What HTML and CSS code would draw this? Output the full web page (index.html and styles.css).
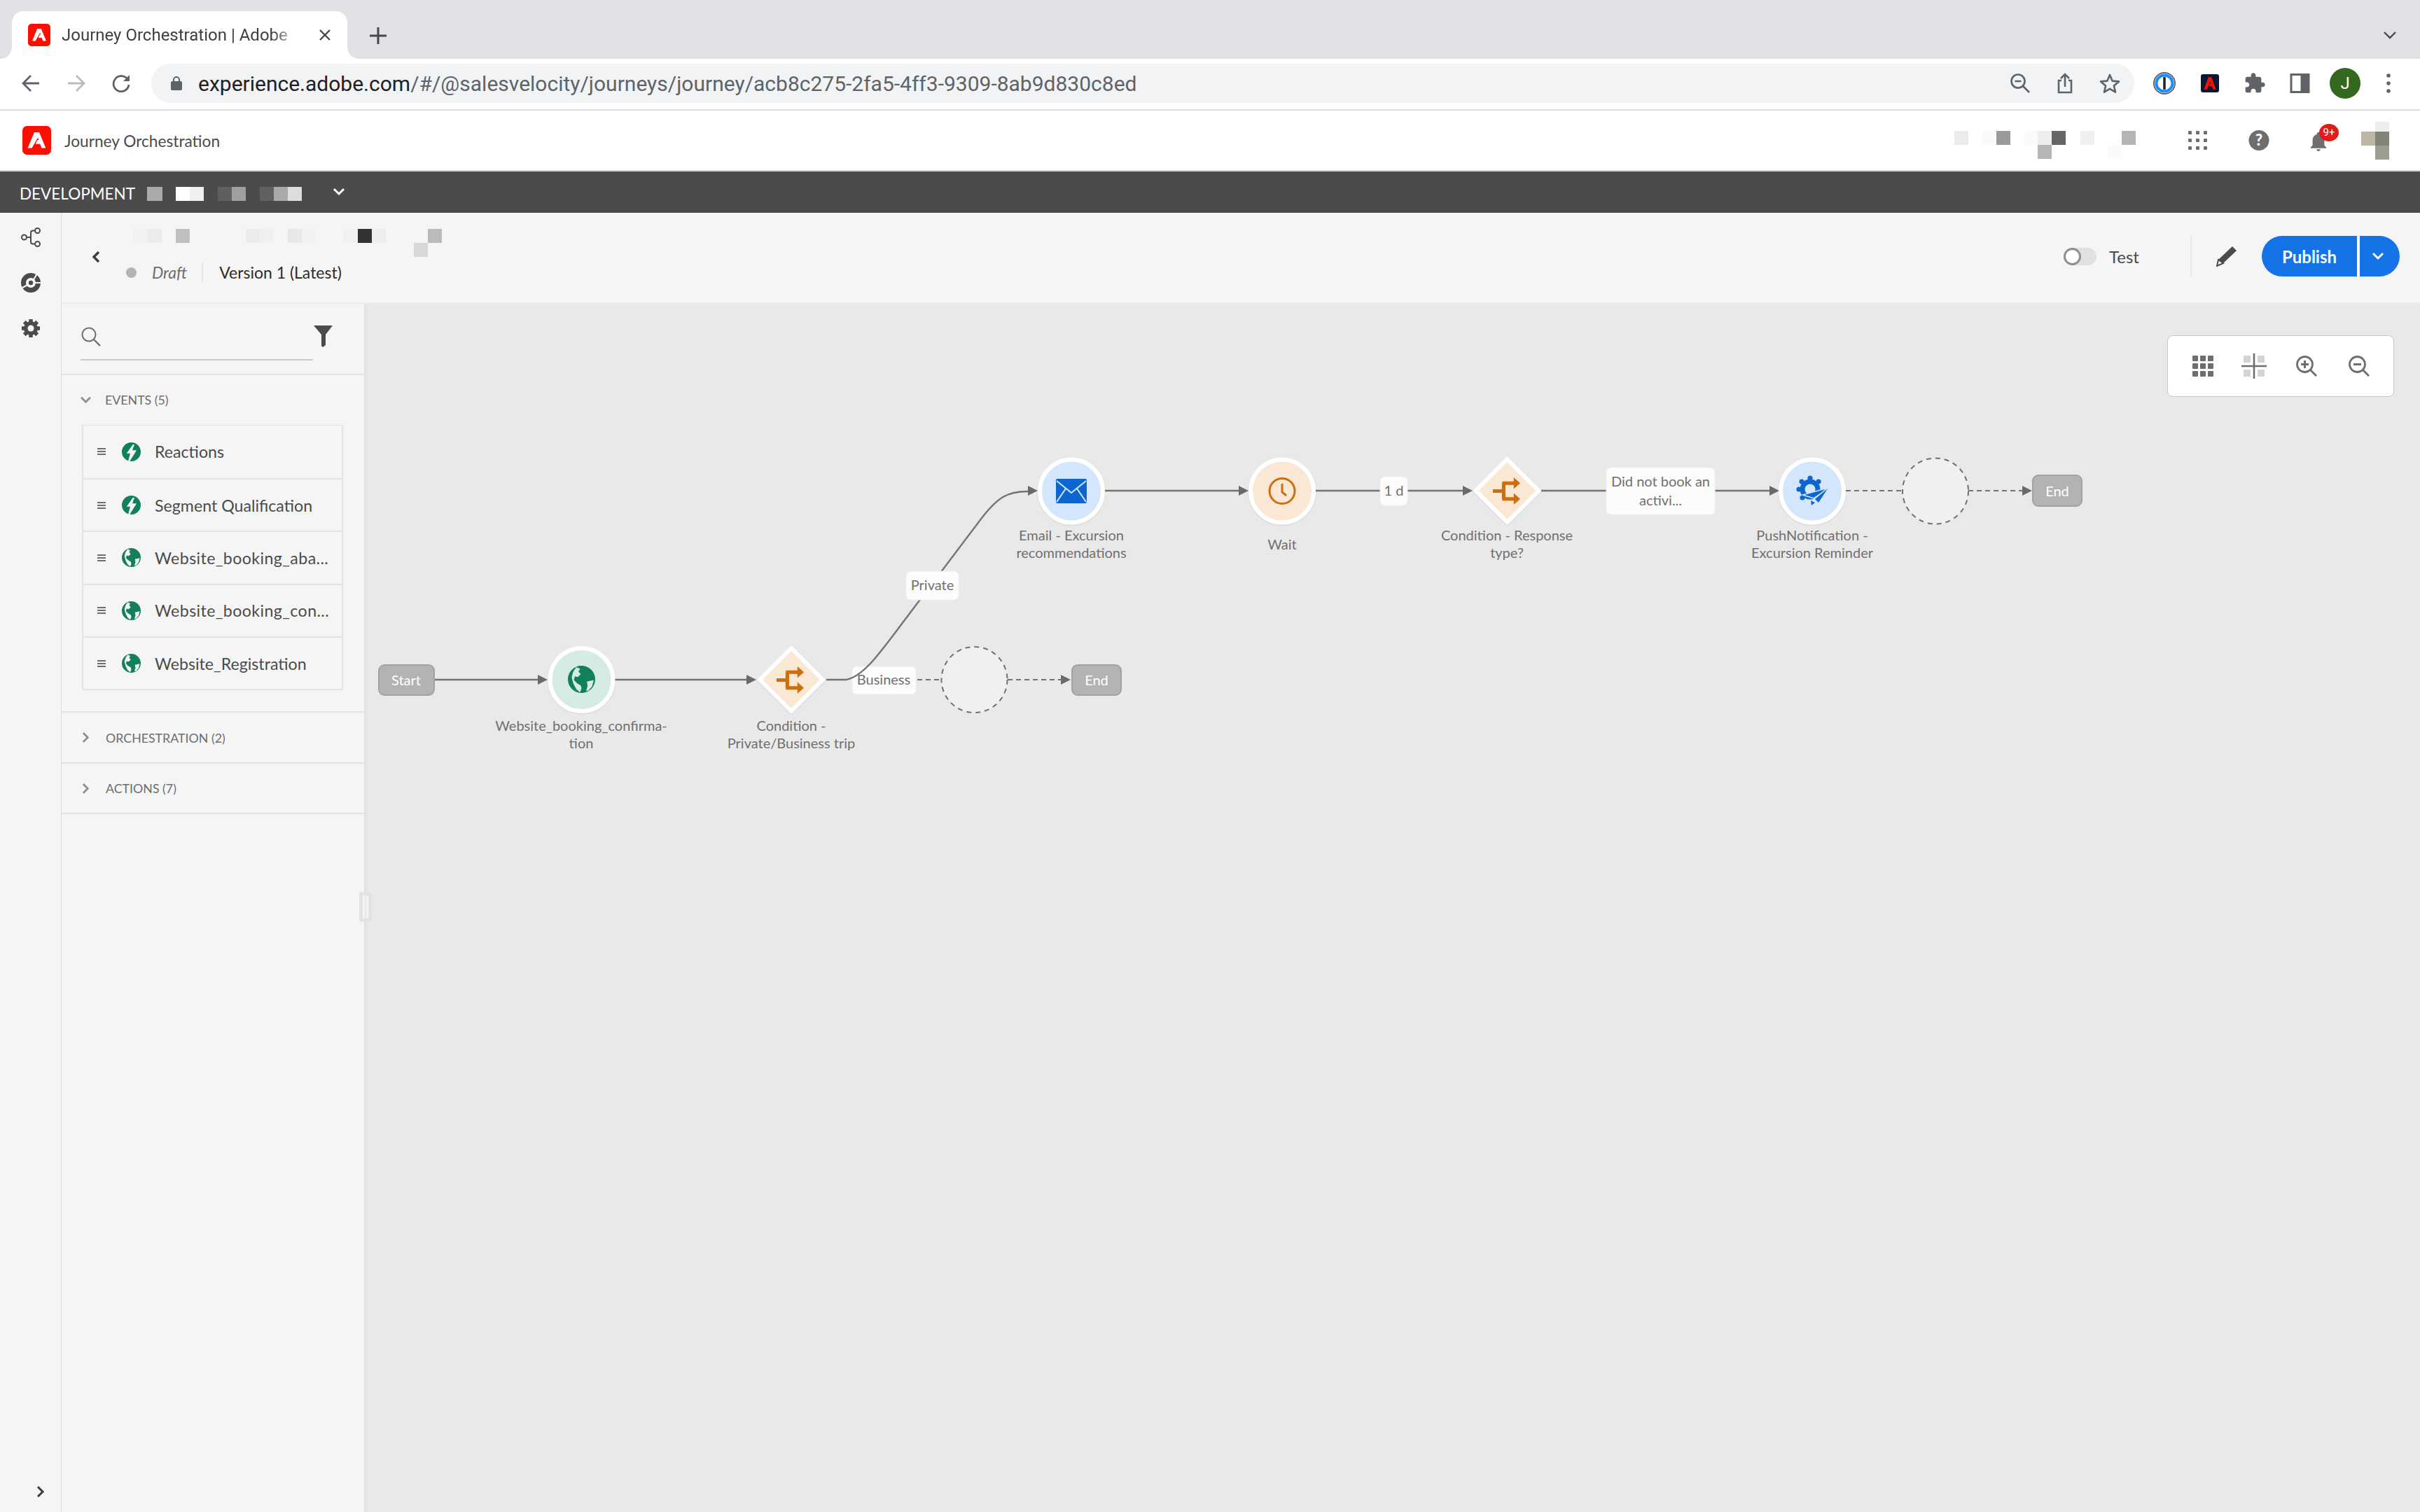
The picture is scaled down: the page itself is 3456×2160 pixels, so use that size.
FILE: index.html
```html
<!DOCTYPE html>
<html lang="en">
<head>
  <meta charset="UTF-8" />
  <title>Journey Orchestration | Adobe</title>
  <link rel="stylesheet" href="styles.css">
</head>
<body>
  <!-- shared icons -->
  <svg class="defs" width="0" height="0">
    <symbol id="adobe" viewBox="0 0 32 32">
      <rect width="32" height="32" rx="5" fill="#fa0f00"/>
      <path d="M13.2 7h5.6l7.2 17.5h-4.6l-1.8-4.5h-5l2-4.4h1.6l-1-2.8L10.6 24.5H6z" fill="#fff"/>
    </symbol>
    <symbol id="bolt" viewBox="0 0 36 36">
      <circle cx="18" cy="18" r="18" fill="#12805c"/>
      <path d="M21 4L9 21h7l-4 15 3 0L28 15h-8l4-11z" fill="#f5f5f5"/>
    </symbol>
    <symbol id="globe" viewBox="0 0 36 36">
      <path fill="#12805c" fill-rule="evenodd" d="M18 0a18 18 0 1 1 0 36a18 18 0 1 1 0-36zM11 2L16 4L14 8L17 11L13 15L9 14L8 19L12 23L17 26L18 30L16 35L11 31L7 23L5 15L7 8zM25 21L34 19L32 27L27 33L24 33L26 27z"/>
    </symbol>
    <symbol id="branch" viewBox="0 0 38 38">
      <path d="M0 19H15M15 8V30M13 8H30M13 30H30" fill="none" stroke="#cb6f10" stroke-width="5"/>
      <path d="M29 0L38 8L29 16zM29 22L38 30L29 38z" fill="#cb6f10"/>
    </symbol>
    <symbol id="down" viewBox="0 0 18 12">
      <path d="M2 2L9 9L16 2" fill="none" stroke="currentColor" stroke-width="3"/>
    </symbol>
    <symbol id="right" viewBox="0 0 12 18">
      <path d="M2 2L9 9L2 16" fill="none" stroke="currentColor" stroke-width="3"/>
    </symbol>
  </svg>

  <div class="tabstrip">
    <div class="tab">
      <svg class="tab-logo"><use href="#adobe"/></svg>
      <span class="tab-title">Journey Orchestration | Adobe</span>
      <svg class="tab-close" viewBox="0 0 18 18"><path d="M2 2L16 16M16 2L2 16" stroke="#45474a" stroke-width="2.4"/></svg>
    </div>
    <svg class="new-tab" viewBox="0 0 26 26"><path d="M13 1V25M1 13H25" stroke="#45474a" stroke-width="3"/></svg>
    <svg class="tab-menu" viewBox="0 0 20 12"><path d="M2 2L10 10L18 2" fill="none" stroke="#45474a" stroke-width="2.4"/></svg>
  </div>

  <div class="toolbar">
    <svg class="nav-btn" viewBox="0 0 26 26"><path d="M25 13H3M13 2L2 13L13 24" fill="none" stroke="#5f6368" stroke-width="2.8"/></svg>
    <svg class="nav-btn nav-fwd" viewBox="0 0 26 26"><path d="M1 13H23M13 2L24 13L13 24" fill="none" stroke="#b9bbbe" stroke-width="2.8"/></svg>
    <svg class="nav-btn nav-reload" viewBox="0 0 26 26"><path d="M22.5 8A11 11 0 1 0 24 15" fill="none" stroke="#5f6368" stroke-width="2.8"/><path d="M25 1V10H16z" fill="#5f6368"/></svg>
    <div class="omnibox">
      <svg class="lock" viewBox="0 0 16 20"><path d="M4 8V5a4 4 0 0 1 8 0v3" fill="none" stroke="#5f6368" stroke-width="2"/><rect y="7" width="16" height="13" rx="2" fill="#5f6368"/></svg>
      <span class="url"><b>experience.adobe.com</b>/#/@salesvelocity/journeys/journey/acb8c275-2fa5-4ff3-9309-8ab9d830c8ed</span>
      <svg class="omni-icon omni-zoom" viewBox="0 0 30 30"><circle cx="12" cy="12" r="9.5" fill="none" stroke="#5f6368" stroke-width="2.6"/><path d="M19 19L28 28M7.5 12H16.5" stroke="#5f6368" stroke-width="2.6"/></svg>
      <svg class="omni-icon" viewBox="0 0 30 30"><path d="M10 11H6V28H24V11H20M15 20V2M9 8L15 2L21 8" fill="none" stroke="#5f6368" stroke-width="2.6"/></svg>
      <svg class="omni-icon" viewBox="0 0 30 30"><path d="M15 3L18.6 11.6L28 12.4L20.9 18.5L23 27.6L15 22.8L7 27.6L9.1 18.5L2 12.4L11.4 11.6z" fill="none" stroke="#5f6368" stroke-width="2.6" stroke-linejoin="round"/></svg>
    </div>
    <svg class="ext ext-1p" viewBox="0 0 32 32"><circle cx="16" cy="16" r="15" fill="#fff" stroke="#5f6368" stroke-width="2"/><circle cx="16" cy="16" r="11.5" fill="none" stroke="#1a8cff" stroke-width="4"/><rect x="14.2" y="7" width="3.6" height="18" rx="1" fill="#1b2a3a"/></svg>
    <svg class="ext ext-adobe" viewBox="0 0 24 24"><rect width="24" height="24" rx="3" fill="#0c1735"/><path d="M10 4h4l6 16h-4l-1.4-4h-4.2l1.6-3.6h1.4L12.4 10L8.2 20H4z" fill="#fa0f00"/></svg>
    <svg class="ext ext-puzzle" viewBox="0 0 24 24"><path fill="#5f6368" d="M20.5 11H19V7c0-1.1-.9-2-2-2h-4V3.5C13 2.12 11.88 1 10.5 1S8 2.12 8 3.5V5H4c-1.1 0-1.99.9-1.99 2v3.8H3.5c1.49 0 2.7 1.21 2.7 2.7s-1.21 2.7-2.7 2.7H2V20c0 1.1.9 2 2 2h3.8v-1.5c0-1.49 1.21-2.7 2.7-2.7 1.49 0 2.7 1.21 2.7 2.7V22H17c1.1 0 2-.9 2-2v-4h1.5c1.38 0 2.5-1.12 2.5-2.5S21.88 11 20.5 11z"/></svg>
    <svg class="ext ext-side" viewBox="0 0 28 28"><path fill="#5f6368" fill-rule="evenodd" d="M0 0H28V28H0zM3 3V25H15V3z"/></svg>
    <div class="profile">J</div>
    <svg class="chrome-menu" viewBox="0 0 6 28"><circle cx="3" cy="3" r="2.8" fill="#5f6368"/><circle cx="3" cy="14" r="2.8" fill="#5f6368"/><circle cx="3" cy="25" r="2.8" fill="#5f6368"/></svg>
  </div>

  <header class="app-header">
    <svg class="app-logo"><use href="#adobe"/></svg>
    <span class="app-name">Journey Orchestration</span>
    <svg class="mosaic mosaic-org" width="260" height="40" viewBox="0 0 260 40" shape-rendering="crispEdges">
      <rect x="0" width="20" height="20" fill="#ebebeb"/>
      <rect x="40" width="20" height="20" fill="#fafafa"/>
      <rect x="60" width="20" height="20" fill="#9a9a9a"/>
      <rect x="100" width="20" height="20" fill="#fafafa"/>
      <rect x="119" width="20" height="20" fill="#eeeeee"/>
      <rect x="139" width="20" height="20" fill="#666666"/>
      <rect x="180" width="20" height="20" fill="#f0f0f0"/>
      <rect x="239" width="20" height="20" fill="#b5b5b5"/>
      <rect x="119" y="20" width="20" height="20" fill="#b5b5b5"/>
      <rect x="219" y="20" width="20" height="20" fill="#fafafa"/>
    </svg>
    <svg class="app-icon app-apps" viewBox="0 0 27 27" fill="#6e6e6e">
      <rect width="5" height="5" rx="1"/><rect x="11" width="5" height="5" rx="1"/><rect x="22" width="5" height="5" rx="1"/>
      <rect y="11" width="5" height="5" rx="1"/><rect x="11" y="11" width="5" height="5" rx="1"/><rect x="22" y="11" width="5" height="5" rx="1"/>
      <rect y="22" width="5" height="5" rx="1"/><rect x="11" y="22" width="5" height="5" rx="1"/><rect x="22" y="22" width="5" height="5" rx="1"/>
    </svg>
    <svg class="app-icon app-help" viewBox="0 0 30 30"><circle cx="15" cy="15" r="15" fill="#6e6e6e"/><text x="15" y="23" class="help-mark">?</text></svg>
    <div class="bell">
      <svg class="app-icon" viewBox="4 2 16 20"><path fill="#6e6e6e" d="M12 22c1.1 0 2-.9 2-2h-4c0 1.1.9 2 2 2zm6-6v-5c0-3.07-1.63-5.64-4.5-6.32V4c0-.83-.67-1.5-1.5-1.5s-1.5.67-1.5 1.5v.68C7.64 5.36 6 7.92 6 11v5l-2 2v1h16v-1l-2-2z"/></svg>
      <span class="badge">9+</span>
    </div>
    <svg class="mosaic mosaic-user" width="40" height="54" viewBox="0 0 40 54" shape-rendering="crispEdges">
      <rect x="20" width="20" height="14" fill="#eeeeee"/>
      <rect y="14" width="20" height="20" fill="#bdb6a5"/>
      <rect x="20" y="14" width="20" height="20" fill="#838378"/>
      <rect x="20" y="34" width="20" height="20" fill="#9c9c90"/>
    </svg>
  </header>

  <div class="env-bar">
    <span class="env-name">DEVELOPMENT</span>
    <svg class="mosaic" width="221" height="20" viewBox="0 0 221 20" shape-rendering="crispEdges">
      <rect width="22" height="20" fill="#aaaaaa"/>
      <rect x="41" width="20" height="20" fill="#ffffff"/>
      <rect x="61" width="20" height="20" fill="#f0f0f0"/>
      <rect x="101" width="20" height="20" fill="#5f5f5f"/>
      <rect x="121" width="20" height="20" fill="#9f9f9f"/>
      <rect x="161" width="20" height="20" fill="#606060"/>
      <rect x="181" width="20" height="20" fill="#aaaaaa"/>
      <rect x="201" width="20" height="20" fill="#dddddd"/>
    </svg>
    <svg class="env-chevron"><use href="#down"/></svg>
  </div>

  <div class="workspace">
    <nav class="rail">
      <svg class="rail-icon" viewBox="0 0 28 28"><g fill="none" stroke="#4b4b4b" stroke-width="2"><circle cx="4.5" cy="14" r="3.5"/><circle cx="23.5" cy="4.5" r="3.5"/><circle cx="23.5" cy="23.5" r="3.5"/><path d="M8 14h6M20 4.5h-3a3 3 0 0 0-3 3v13a3 3 0 0 0 3 3h3"/></g></svg>
      <svg class="rail-icon" viewBox="0 0 28 28"><circle cx="14" cy="14" r="10.5" fill="none" stroke="#4b4b4b" stroke-width="7"/><circle cx="14" cy="14" r="3.2" fill="#4b4b4b"/><path d="M17 11L23 1M18 14H28M2 21L11 16" stroke="#f5f5f5" stroke-width="2.2"/></svg>
      <svg class="rail-icon" viewBox="0 0 28 28"><path d="M14 1V27M1 14H27M4.8 4.8L23.2 23.2M23.2 4.8L4.8 23.2" stroke="#4b4b4b" stroke-width="5.5"/><circle cx="14" cy="14" r="10" fill="#4b4b4b"/><circle cx="14" cy="14" r="4.5" fill="#f5f5f5"/></svg>
      <svg class="rail-expand"><use href="#right"/></svg>
    </nav>

    <div class="journey">
      <div class="subheader">
        <svg class="back" viewBox="0 0 12 18"><path d="M10 2L3 9L10 16" fill="none" stroke="#3c3c3c" stroke-width="3.4"/></svg>
        <div class="title-block">
          <svg class="mosaic mosaic-title" width="440" height="40" viewBox="0 0 440 40" shape-rendering="crispEdges">
            <rect width="20" height="20" fill="#f1f1f1"/>
            <rect x="20" width="20" height="20" fill="#ebebeb"/>
            <rect x="60" width="20" height="20" fill="#bfbfbf"/>
            <rect x="160" width="20" height="20" fill="#ececec"/>
            <rect x="180" width="20" height="20" fill="#f0f0f0"/>
            <rect x="220" width="20" height="20" fill="#e8e8e8"/>
            <rect x="240" width="20" height="20" fill="#f1f1f1"/>
            <rect x="300" width="20" height="20" fill="#f1f1f1"/>
            <rect x="320" width="20" height="20" fill="#333333"/>
            <rect x="340" width="20" height="20" fill="#eeeeee"/>
            <rect x="420" width="20" height="20" fill="#bbbbbb"/>
            <rect x="400" y="20" width="20" height="20" fill="#d8d8d8"/>
          </svg>
          <div class="status-row">
            <span class="status-dot"></span>
            <span class="status">Draft</span>
            <span class="version">Version 1 (Latest)</span>
          </div>
        </div>
        <div class="actions">
          <span class="toggle"><span class="toggle-knob"></span></span>
          <span class="toggle-label">Test</span>
          <span class="action-sep"></span>
          <svg class="pencil" viewBox="0 0 30 30"><path d="M23 1L29 7L10 25L3 20z" fill="#4b4b4b"/><path d="M3 20L10 25L1 29z" fill="none" stroke="#4b4b4b" stroke-width="2"/></svg>
          <div class="publish">
            <button class="publish-main">Publish</button>
            <button class="publish-more"><svg class="publish-chevron"><use href="#down"/></svg></button>
          </div>
        </div>
      </div>

      <div class="body-row">
        <aside class="panel">
          <div class="panel-search">
            <div class="search-field">
              <svg class="search-icon" viewBox="0 0 28 28"><circle cx="11" cy="11" r="9.5" fill="none" stroke="#6e6e6e" stroke-width="2"/><path d="M18 18L27 27" stroke="#6e6e6e" stroke-width="2.4"/></svg>
            </div>
            <svg class="funnel" viewBox="0 0 27 31"><path d="M0 0H27L17 13V28L13 31L11 29V13z" fill="#4b4b4b"/></svg>
          </div>

          <section class="group group-open">
            <div class="group-head"><svg class="group-down"><use href="#down"/></svg><span>EVENTS (5)</span></div>
            <ul class="event-list">
              <li class="event"><span class="drag"></span><svg class="event-icon"><use href="#bolt"/></svg><span>Reactions</span></li>
              <li class="event"><span class="drag"></span><svg class="event-icon"><use href="#bolt"/></svg><span>Segment Qualification</span></li>
              <li class="event"><span class="drag"></span><svg class="event-icon"><use href="#globe"/></svg><span class="event-cut">Website_booking_aba...</span></li>
              <li class="event"><span class="drag"></span><svg class="event-icon"><use href="#globe"/></svg><span class="event-cut">Website_booking_con...</span></li>
              <li class="event"><span class="drag"></span><svg class="event-icon"><use href="#globe"/></svg><span>Website_Registration</span></li>
            </ul>
          </section>
          <section class="group">
            <div class="group-head"><svg class="group-right"><use href="#right"/></svg><span>ORCHESTRATION (2)</span></div>
          </section>
          <section class="group">
            <div class="group-head"><svg class="group-right"><use href="#right"/></svg><span>ACTIONS (7)</span></div>
          </section>
        </aside>

        <div class="splitter"><span class="splitter-grip"></span></div>

        <main class="canvas">
          <!-- viewBox uses page coordinates so nodes read like the layout -->
          <svg class="diagram" viewBox="524 434 2932 1726">
            <g class="wire">
              <path d="M620 971H768"/>
              <path d="M878 971H1066"/>
              <path d="M1578 701H1770"/>
              <path d="M1878 701H1971M2010 701H2089"/>
              <path d="M2201 701H2294M2449 701H2528"/>
            </g>
            <g class="wire wire-dash">
              <path d="M1310 971H1344"/>
              <path d="M1439 971H1515"/>
              <path d="M2636 701H2718"/>
              <path d="M2811 701H2888"/>
            </g>
            <g class="arrows">
              <path d="M768 964L782 971L768 978z"/>
              <path d="M1066 964L1080 971L1066 978z"/>
              <path d="M1468 694L1482 701L1468 708z"/>
              <path d="M1769 694L1783 701L1769 708z"/>
              <path d="M2089 694L2103 701L2089 708z"/>
              <path d="M2527 694L2541 701L2527 708z"/>
              <path d="M1515 964L1529 971L1515 978z"/>
              <path d="M2888 694L2902 701L2888 708z"/>
            </g>

            <rect class="terminal" x="541" y="950" width="79" height="43" rx="8"/>
            <text class="terminal-text" x="580" y="979">Start</text>

            <circle class="node node-green" cx="830.5" cy="971" r="45"/>
            <use href="#globe" x="811" y="951" width="39" height="39"/>
            <text class="node-label" x="830" y="1044">Website_booking_confirma-</text>
            <text class="node-label" x="830" y="1069">tion</text>

            <path class="node node-orange" d="M1130 926L1175 971L1130 1016L1085 971z"/>
            <use href="#branch" x="1109" y="952" width="39" height="39"/>
            <text class="node-label" x="1130" y="1044">Condition -</text>
            <text class="node-label" x="1130" y="1069">Private/Business trip</text>

            <rect class="edge-label" x="1217" y="952" width="91" height="40" rx="6"/>
            <text class="edge-text" x="1262" y="978">Business</text>
            <circle class="ghost" cx="1391.5" cy="971" r="47"/>
            <rect class="terminal" x="1531" y="950" width="70" height="43" rx="8"/>
            <text class="terminal-text" x="1566" y="979">End</text>

            <!-- branch to the top path runs over the Business label, under Private -->
            <path class="wire-curve" d="M1180 971H1208C1232 967 1255 935 1285 895L1396 748C1425 708 1440 702 1468 702"/>
            <rect class="edge-label" x="1294" y="816" width="75" height="41" rx="6"/>
            <text class="edge-text" x="1331.5" y="843">Private</text>

            <circle class="node node-blue" cx="1530" cy="701.5" r="45"/>
            <rect class="mail" x="1508" y="684" width="44" height="35" rx="2"/>
            <path class="mail-fold" d="M1509 687L1530 704L1551 687M1509 717L1522 698M1551 717L1538 698"/>
            <text class="node-label" x="1530" y="772">Email - Excursion</text>
            <text class="node-label" x="1530" y="797">recommendations</text>

            <circle class="node node-orange" cx="1831" cy="701.5" r="45"/>
            <circle class="clock" cx="1831" cy="701.5" r="18"/>
            <path class="clock" d="M1831 691V703L1837 708"/>
            <text class="node-label" x="1831" y="785">Wait</text>

            <rect class="edge-label" x="1971" y="681" width="39" height="41" rx="6"/>
            <text class="edge-text" x="1990.5" y="708">1 d</text>

            <path class="node node-orange" d="M2152.5 656L2197.5 701L2152.5 746L2107.5 701z"/>
            <use href="#branch" x="2132" y="682" width="39" height="39"/>
            <text class="node-label" x="2152" y="772">Condition - Response</text>
            <text class="node-label" x="2152" y="797">type?</text>

            <rect class="edge-label" x="2294" y="668" width="155" height="67" rx="6"/>
            <text class="edge-text" x="2371.5" y="695">Did not book an</text>
            <text class="edge-text" x="2371.5" y="722">activi...</text>

            <circle class="node node-blue" cx="2588" cy="701.5" r="45"/>
            <g class="push-gear">
              <circle class="gear-ring" cx="2585" cy="699" r="11"/>
              <circle cx="2585" cy="683" r="3.6"/><circle cx="2597" cy="688" r="3.6"/>
              <circle cx="2573" cy="688" r="3.6"/><circle cx="2569" cy="699" r="3.6"/>
              <circle cx="2574" cy="711" r="3.6"/>
            </g>
            <path class="push-plane" d="M2610 698L2577 707L2590 711z"/>
            <path class="push-plane" d="M2610 698L2592 713L2597 718z"/>
            <path class="push-tail" d="M2586 715L2592 718L2587 722z"/>
            <text class="node-label" x="2588" y="772">PushNotification -</text>
            <text class="node-label" x="2588" y="797">Excursion Reminder</text>

            <circle class="ghost" cx="2764" cy="701.5" r="47"/>
            <rect class="terminal" x="2903" y="679" width="70" height="44" rx="8"/>
            <text class="terminal-text" x="2938" y="709">End</text>
          </svg>

          <div class="view-tools">
            <svg class="view-icon" viewBox="0 0 30 30" fill="#6e6e6e">
              <rect width="8" height="8" rx="1"/><rect x="11" width="8" height="8" rx="1"/><rect x="22" width="8" height="8" rx="1"/>
              <rect y="11" width="8" height="8" rx="1"/><rect x="11" y="11" width="8" height="8" rx="1"/><rect x="22" y="11" width="8" height="8" rx="1"/>
              <rect y="22" width="8" height="8" rx="1"/><rect x="11" y="22" width="8" height="8" rx="1"/><rect x="22" y="22" width="8" height="8" rx="1"/>
            </svg>
            <svg class="view-icon view-fit" viewBox="0 0 36 36">
              <g fill="#d4d4d4"><rect x="3" y="3" width="10" height="10"/><rect x="23" y="3" width="10" height="10"/><rect x="3" y="23" width="10" height="10"/><rect x="23" y="23" width="10" height="10"/></g>
              <path d="M18 0V36M0 18H36" stroke="#6e6e6e" stroke-width="2.6"/>
            </svg>
            <svg class="view-icon view-zoom" viewBox="0 0 30 30"><circle cx="12.5" cy="12.5" r="11" fill="none" stroke="#6e6e6e" stroke-width="2.8"/><path d="M20.5 20.5L29 29" stroke="#6e6e6e" stroke-width="3"/><path d="M7 12.5H18M12.5 7V18" stroke="#6e6e6e" stroke-width="3"/></svg>
            <svg class="view-icon view-zoom" viewBox="0 0 30 30"><circle cx="12.5" cy="12.5" r="11" fill="none" stroke="#6e6e6e" stroke-width="2.8"/><path d="M20.5 20.5L29 29" stroke="#6e6e6e" stroke-width="3"/><path d="M7 12.5H18" stroke="#6e6e6e" stroke-width="3"/></svg>
          </div>
        </main>
      </div>
    </div>
  </div>
</body>
</html>
```

FILE: styles.css
```css
* { box-sizing: border-box; }
html, body { height: 100%; }
body {
  margin: 0;
  display: flex;
  flex-direction: column;
  overflow: hidden;
  background: #f5f5f5;
  color: #4b4b4b;
  font-family: Lato, "Noto Sans", sans-serif;
  font-size: 24px;
}
.defs { position: absolute; }
svg { display: block; flex: none; }

/* browser chrome */
.tabstrip {
  height: 84px;
  background: #dfe1e5;
  display: flex;
  align-items: flex-end;
  padding-left: 17px;
  flex: none;
}
.tab {
  position: relative;
  width: 479px;
  height: 68px;
  background: #fff;
  border-radius: 16px 16px 0 0;
  display: flex;
  align-items: center;
  padding-left: 23px;
}
.tab::before, .tab::after {
  content: "";
  position: absolute;
  bottom: 0;
  width: 16px;
  height: 16px;
  background: radial-gradient(circle at 0 0, transparent 15.5px, #fff 16px);
}
.tab::before { left: -16px; }
.tab::after {
  right: -16px;
  background: radial-gradient(circle at 100% 0, transparent 15.5px, #fff 16px);
}
.tab-logo { width: 32px; height: 32px; }
.tab-title {
  margin-left: 16px;
  width: 342px;
  white-space: nowrap;
  overflow: hidden;
  font-family: Roboto, sans-serif;
  font-size: 24px;
  color: #3c4043;
  -webkit-mask-image: linear-gradient(90deg, #000 88%, transparent 100%);
  mask-image: linear-gradient(90deg, #000 88%, transparent 100%);
}
.tab-close { width: 18px; height: 18px; margin-left: 25px; }
.new-tab { width: 26px; height: 26px; margin: 0 0 20px 31px; }
.tab-menu { width: 20px; height: 12px; margin: 0 33px 28px auto; }

.toolbar {
  height: 74px;
  flex: none;
  background: #fff;
  border-bottom: 2px solid #dedede;
  display: flex;
  align-items: center;
  padding: 0 40px 2px 31px;
}
.nav-btn { width: 26px; height: 26px; }
.nav-fwd { margin-left: 39px; }
.nav-reload { margin-left: 38px; }
.omnibox {
  margin-left: 30px;
  width: 2832px;
  height: 56px;
  border-radius: 28px;
  background: #f1f3f4;
  display: flex;
  align-items: center;
  padding: 0 20px 0 28px;
}
.lock { width: 16px; height: 20px; }
.url {
  margin-left: 23px;
  font-family: Roboto, sans-serif;
  font-size: 30px;
  color: #5f6368;
}
.url b { font-weight: 400; color: #202124; }
.omni-icon { width: 30px; height: 30px; margin-left: 34px; }
.omni-zoom { margin-left: auto; }
.ext { width: 32px; height: 32px; }
.ext-1p { margin-left: 27px; }
.ext-adobe { width: 26px; height: 26px; margin-left: 36px; }
.ext-puzzle { margin-left: 35px; }
.ext-side { width: 29px; height: 28px; margin-left: 34px; }
.profile {
  width: 44px;
  height: 44px;
  margin-left: 28px;
  border-radius: 50%;
  background: #33691e;
  color: #fff;
  font-family: Roboto, sans-serif;
  font-size: 24px;
  display: flex;
  align-items: center;
  justify-content: center;
}
.chrome-menu { width: 6px; height: 28px; margin-left: 37px; }

/* adobe shell */
.app-header {
  height: 87px;
  flex: none;
  background: #fff;
  border-bottom: 2px solid #d3d3d3;
  display: flex;
  align-items: center;
  padding: 0 44px 0 32px;
}
.app-logo { width: 41px; height: 41px; }
.app-name { margin: 2px 0 0 19px; font-size: 22.7px; color: #4b4b4b; }
.mosaic-org { margin: 12px 0 0 auto; }
.app-icon { width: 26px; height: 28px; }
.app-apps { width: 27px; height: 27px; margin-left: 74px; }
.app-help { width: 30px; height: 29px; margin-left: 59px; }
.help-mark {
  font-family: Lato, sans-serif;
  font-size: 23px;
  font-weight: 900;
  fill: #fff;
  text-anchor: middle;
}
.bell { position: relative; margin: 3px 0 0 57px; }
.badge {
  position: absolute;
  left: 14px;
  top: -11px;
  width: 28px;
  height: 25px;
  border-radius: 50%;
  background: #e41a1a;
  color: #fff;
  font-family: Roboto, sans-serif;
  font-size: 15px;
  line-height: 25px;
  text-align: center;
}
.mosaic-user { margin-left: 48px; }

.env-bar {
  height: 59px;
  flex: none;
  background: #4b4b4b;
  display: flex;
  align-items: center;
  padding: 4px 0 0 28px;
}
.env-name { font-size: 22.5px; color: #fff; width: 182px; white-space: nowrap; }
.env-chevron { width: 18px; height: 12px; margin: -5px 0 0 44px; color: #fff; }

.workspace { flex: 1; display: flex; min-height: 0; }
.rail {
  width: 88px;
  flex: none;
  border-right: 1.5px solid #dcdcdc;
  display: flex;
  flex-direction: column;
  padding: 21px 0 0 30px;
}
.rail-icon { width: 28px; height: 28px; margin-bottom: 37px; }
.rail-expand { width: 12px; height: 18px; margin: auto 0 20px 22px; color: #3c3c3c; }

.journey { flex: 1; display: flex; flex-direction: column; min-width: 0; }
.subheader {
  height: 130px;
  flex: none;
  border-bottom: 2px solid #ececec;
  display: flex;
  align-items: center;
  padding: 0 29px 4px 43px;
}
.back { width: 12px; height: 18px; margin-top: 2px; }
.title-block { align-self: flex-start; margin: 23px 0 0 37px; }
.mosaic-title { margin-left: 11px; }
.status-row { display: flex; align-items: center; height: 30px; margin-top: 7px; font-size: 23px; }
.status-dot { width: 15px; height: 15px; border-radius: 50%; background: #b3b3b3; }
.status {
  margin-left: 22px;
  padding-right: 21px;
  font-style: italic;
  color: #6e6e6e;
  border-right: 2px solid #e6e6e6;
}
.version { margin-left: 23px; color: #2c2c2c; }

.actions { margin-left: auto; display: flex; align-items: center; }
.toggle {
  position: relative;
  width: 47px;
  height: 25px;
  border-radius: 13px;
  background: #e1e1e1;
}
.toggle-knob {
  position: absolute;
  left: 0;
  top: 0;
  width: 25px;
  height: 25px;
  border-radius: 50%;
  background: #fff;
  border: 3.5px solid #8e8e8e;
}
.toggle-label { margin-left: 18px; width: 116px; }
.action-sep { width: 2px; height: 58px; background: #e8e8e8; }
.pencil { width: 30px; height: 30px; margin-left: 35px; }
.publish { display: flex; margin-left: 35px; height: 58px; }
.publish button {
  border: none;
  background: #1473e6;
  color: #fff;
  font-family: inherit;
  font-size: 24px;
  font-weight: 700;
  height: 58px;
  padding: 0;
}
.publish-main { width: 136px; border-radius: 29px 0 0 29px; }
.publish-more {
  width: 57px;
  margin-left: 4px;
  border-radius: 0 29px 29px 0;
  display: flex;
  align-items: center;
  justify-content: center;
}
.publish-chevron { width: 18px; height: 12px; color: #fff; margin-right: 5px; }

.body-row { flex: 1; display: flex; min-height: 0; }
.panel { width: 432px; flex: none; }
.panel-search {
  height: 102px;
  border-bottom: 2px solid #e3e3e3;
  display: flex;
  padding-left: 27px;
}
.search-field {
  width: 332px;
  height: 81px;
  border-bottom: 2px solid #c8c8c8;
  padding: 33px 0 0 1px;
}
.search-icon { width: 28px; height: 28px; }
.funnel { width: 27px; height: 31px; margin: 31px 0 0 1px; }

.group { border-bottom: 2px solid #e3e3e3; }
.group-open { padding-bottom: 30px; }
.group-head {
  height: 70.5px;
  display: flex;
  align-items: center;
  padding-left: 26px;
  font-size: 17.8px;
  color: #6e6e6e;
}
.group-down { width: 17px; height: 11px; margin-right: 19px; color: #8e8e8e; }
.group-right { width: 11px; height: 17px; margin: 0 23px 0 3px; color: #8e8e8e; }
.event-list {
  list-style: none;
  margin: 0 0 0 29px;
  padding: 0;
  width: 373px;
  border: 2px solid #e4e4e4;
  border-top-width: 1px;
}
.event {
  height: 75.4px;
  display: flex;
  align-items: center;
  padding-left: 20px;
  white-space: nowrap;
  border-top: 2px solid #e4e4e4;
  font-size: 23.2px;
  color: #4b4b4b;
}
.event:first-child { border-top: none; }
.event-cut { letter-spacing: .4px; }
.drag {
  width: 12px;
  height: 10px;
  border-top: 2px solid #6e6e6e;
  border-bottom: 2px solid #6e6e6e;
  background: linear-gradient(#6e6e6e, #6e6e6e) center / 100% 2px no-repeat;
}
.event-icon { width: 27px; height: 27px; margin: 0 20px 0 23px; }

.splitter { position: relative; z-index: 1; width: 4px; flex: none; background: #e3e3e3; }
.splitter-grip {
  position: absolute;
  left: -7px;
  top: 840px;
  width: 18px;
  height: 43px;
  background: #ebebeb;
  border-radius: 2px;
  border: 5px solid #e3e3e3;
  box-shadow: inset 2px 0 0 #f5f5f5, inset -2px 0 0 #f5f5f5;
}

/* journey diagram */
.canvas { position: relative; flex: 1; background: #e9e9e9; min-width: 0; }
.diagram { width: 100%; height: 100%; }
.wire path, .wire-curve { fill: none; stroke: #737373; stroke-width: 2.4; }
.wire-dash path { stroke-dasharray: 7 5; stroke-width: 2; }
.arrows path { fill: #6a6a6a; }
.terminal { fill: #b3b3b3; stroke: #a2a2a2; stroke-width: 2; }
.terminal-text {
  font-size: 20px;
  fill: #fff;
  text-anchor: middle;
}
.node {
  stroke: #fff;
  stroke-width: 6;
  stroke-linejoin: round;
  filter: drop-shadow(0 1px 1px rgba(0, 0, 0, .08));
}
.node-green { fill: #d5ebe3; }
.node-orange { fill: #fae8d4; }
.node-blue { fill: #d3e6fb; }
.node-label { font-size: 20px; fill: #707070; text-anchor: middle; }
.edge-label { fill: #fcfcfc; stroke: #f0f0f0; stroke-width: 1; }
.edge-text { font-size: 20px; fill: #707070; text-anchor: middle; }
.ghost { fill: #eff0f0; stroke: #707070; stroke-width: 2; stroke-dasharray: 7 6; }
.mail { fill: #0d66d0; }
.mail-fold { fill: none; stroke: #d3e6fb; stroke-width: 2; }
.clock { fill: none; stroke: #cb6f10; stroke-width: 3; }
.push-gear { fill: #0d66d0; }
.gear-ring { fill: none; stroke: #0d66d0; stroke-width: 7; }
.push-plane { fill: #0d66d0; stroke: #d3e6fb; stroke-width: 3; paint-order: stroke; }
.push-tail { fill: #0d66d0; }

.view-tools {
  position: absolute;
  right: 37px;
  top: 45px;
  width: 324px;
  height: 88px;
  background: #fff;
  border: 1.5px solid #c8c8c8;
  border-radius: 8px;
  display: flex;
  align-items: center;
  padding-left: 35px;
}
.view-icon { width: 30px; height: 30px; }
.view-fit { width: 36px; height: 36px; margin-left: 40px; }
.view-zoom { margin-left: 42px; }
.view-zoom:last-child { margin-left: 45px; }
```
